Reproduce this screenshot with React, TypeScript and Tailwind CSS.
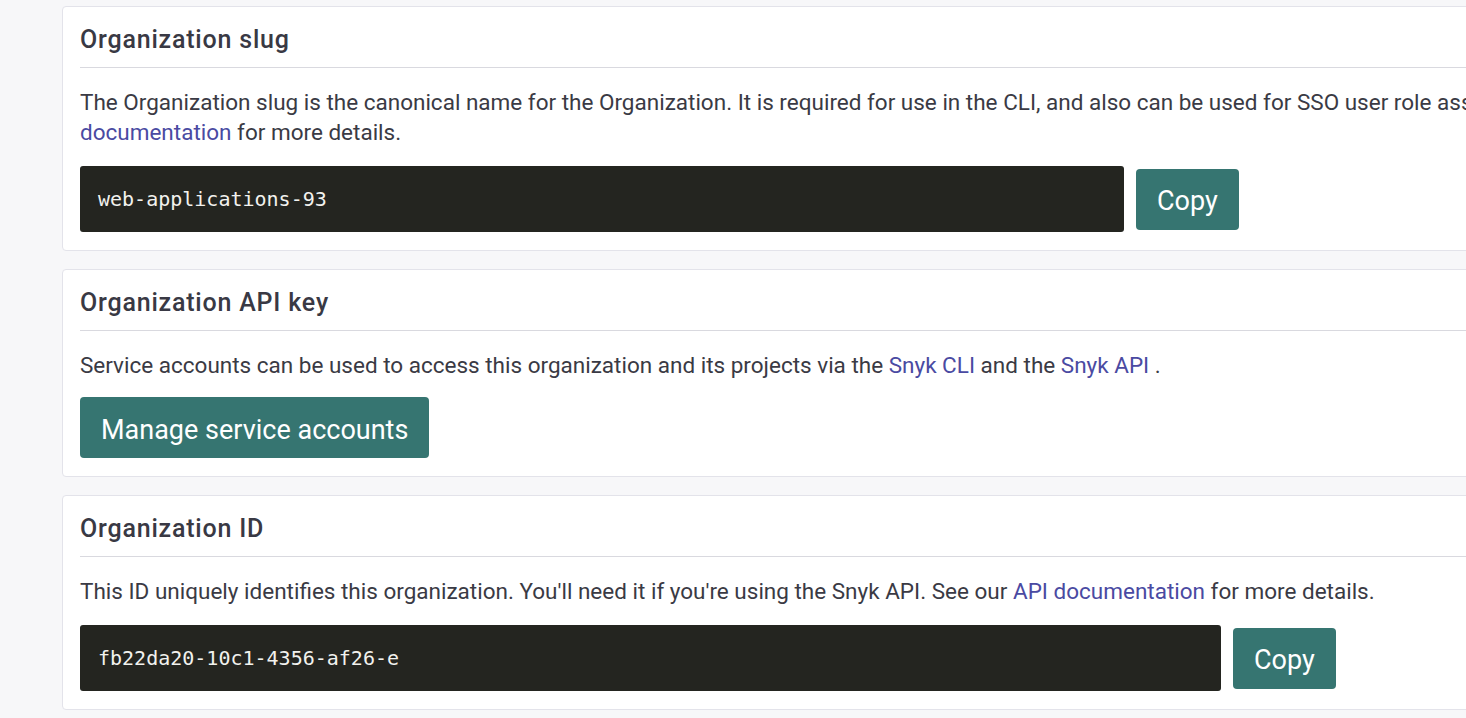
const font = { fontFamily: "Roboto, 'Liberation Sans', sans-serif" }

function Card({ title, children }: { title: string; children: React.ReactNode }) {
  return (
    <section className="w-[1600px] shrink-0 rounded-[4px] border border-[#e3e3ea] bg-white px-[17px] pt-[15px] pb-[18px]">
      <h2 className="border-b border-[#d9d9df] pb-[9px] text-[25px] font-medium leading-[36px] tracking-[0.8px] text-[#393944]">
        {title}
      </h2>
      <div className="mt-[19px]">{children}</div>
    </section>
  )
}

function Link({ children }: { children: React.ReactNode }) {
  return <a className="text-[#4a4aa2]">{children}</a>
}

function CodeRow({ value, width }: { value: string; width: string }) {
  return (
    <div className="mt-[19px] flex items-center gap-[12px]">
      <div
        className={`${width} flex h-[66px] items-center rounded-[3px] bg-[#242520] px-[18px] text-[20px] text-[#f2f2ee]`}
        style={{ fontFamily: "'DejaVu Sans Mono', 'Liberation Mono', monospace" }}
      >
        {value}
      </div>
      <button className="h-[61px] rounded-[4px] bg-[#367571] px-[21px] pt-[5px] text-[27px] text-white">Copy</button>
    </div>
  )
}

export default function App() {
  return (
    <div className="h-[718px] w-[1466px] overflow-hidden bg-[#f7f7f9]" style={font}>
      <div className="flex flex-col gap-[18px] pl-[62px] pt-[6px]">
        <Card title="Organization slug">
          <p className="text-[22.5px] leading-[30px] text-[#3a3a44]">
            <span className="whitespace-nowrap">
              The Organization slug is the canonical name for the Organization. It is required for use in the CLI, and
              also can be used for SSO user role assignments. See our
            </span>
            <br />
            <Link>documentation</Link> for more details.
          </p>
          <CodeRow value="web-applications-93" width="w-[1044px]" />
        </Card>

        <Card title="Organization API key">
          <p className="text-[22.5px] leading-[30px] text-[#3a3a44]">
            Service accounts can be used to access this organization and its projects via the <Link>Snyk CLI</Link> and
            the <Link>Snyk API</Link> .
          </p>
          <div className="mt-[17px]">
            <button className="h-[61px] rounded-[4px] bg-[#367571] px-[21px] pt-[5px] text-[27px] text-white">
              Manage service accounts
            </button>
          </div>
        </Card>

        <Card title="Organization ID">
          <p className="text-[22.5px] leading-[30px] text-[#3a3a44]">
            This ID uniquely identifies this organization. You'll need it if you're using the Snyk API. See our{" "}
            <Link>API documentation</Link> for more details.
          </p>
          <CodeRow value="fb22da20-10c1-4356-af26-e" width="w-[1141px]" />
        </Card>
      </div>
    </div>
  )
}
